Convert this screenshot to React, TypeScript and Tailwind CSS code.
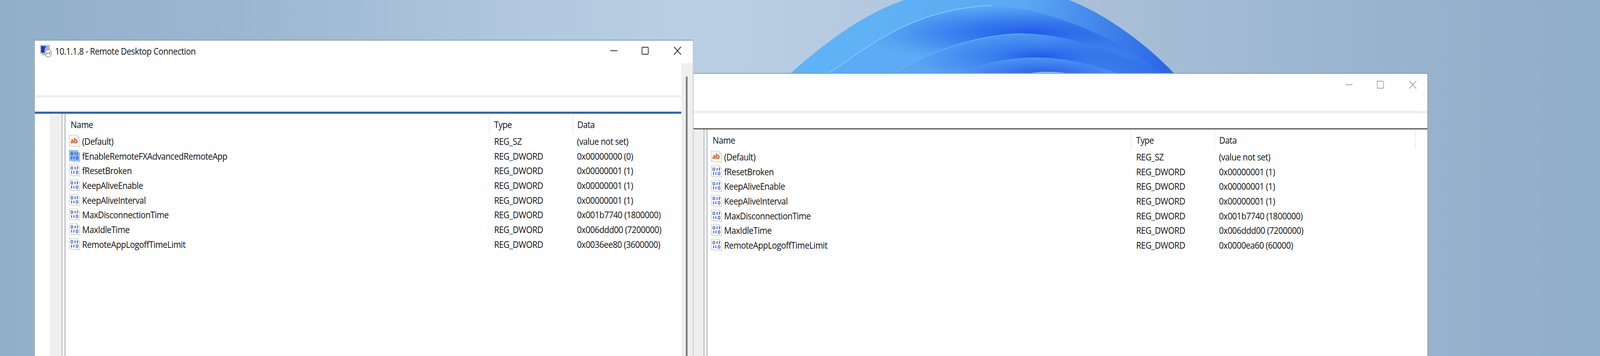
import type { ReactNode } from "react";

const font = "font-['Open_Sans','Noto_Sans',sans-serif]";

const win1Rows = [
  { name: "(Default)", type: "REG_SZ", data: "(value not set)", str: true },
  { name: "fEnableRemoteFXAdvancedRemoteApp", type: "REG_DWORD", data: "0x00000000 (0)", selected: true },
  { name: "fResetBroken", type: "REG_DWORD", data: "0x00000001 (1)" },
  { name: "KeepAliveEnable", type: "REG_DWORD", data: "0x00000001 (1)" },
  { name: "KeepAliveInterval", type: "REG_DWORD", data: "0x00000001 (1)" },
  { name: "MaxDisconnectionTime", type: "REG_DWORD", data: "0x001b7740 (1800000)" },
  { name: "MaxIdleTime", type: "REG_DWORD", data: "0x006ddd00 (7200000)" },
  { name: "RemoteAppLogoffTimeLimit", type: "REG_DWORD", data: "0x0036ee80 (3600000)" },
];

const win2Rows = [
  { name: "(Default)", type: "REG_SZ", data: "(value not set)", str: true },
  { name: "fResetBroken", type: "REG_DWORD", data: "0x00000001 (1)" },
  { name: "KeepAliveEnable", type: "REG_DWORD", data: "0x00000001 (1)" },
  { name: "KeepAliveInterval", type: "REG_DWORD", data: "0x00000001 (1)" },
  { name: "MaxDisconnectionTime", type: "REG_DWORD", data: "0x001b7740 (1800000)" },
  { name: "MaxIdleTime", type: "REG_DWORD", data: "0x006ddd00 (7200000)" },
  { name: "RemoteAppLogoffTimeLimit", type: "REG_DWORD", data: "0x0000ea60 (60000)" },
];

type Row = { name: string; type: string; data: string; str?: boolean; selected?: boolean };

const petal2 = "M2383 190 V187 C2480 130 2620 20 2852 14 C3000 18 3200 90 3345 190 Z";
const petal3 = "M2569 190 V187 C2660 140 2790 88 2943 86 C3080 88 3230 140 3325 187 V190 Z";

function Bloom() {
  return (
    <svg className="absolute left-[2200px] top-0" width="1250" height="200" viewBox="2200 0 1250 200">
      <defs>
        <linearGradient id="p1" x1="2500" y1="0" x2="3350" y2="180" gradientUnits="userSpaceOnUse">
          <stop offset="0" stopColor="#5fb2f5" />
          <stop offset="0.5" stopColor="#5ca8f3" />
          <stop offset="1" stopColor="#2a66e6" />
        </linearGradient>
        <radialGradient id="p2" cx="0" cy="0" r="500" gradientUnits="userSpaceOnUse" gradientTransform="translate(2960 85) scale(1 0.16)">
          <stop offset="0" stopColor="#2459e8" />
          <stop offset="0.35" stopColor="#3478ee" />
          <stop offset="0.85" stopColor="#57a5f3" />
          <stop offset="1" stopColor="#5cabf4" />
        </radialGradient>
        <radialGradient id="p3" cx="0" cy="0" r="380" gradientUnits="userSpaceOnUse" gradientTransform="translate(2990 145) scale(1 0.2)">
          <stop offset="0" stopColor="#2459e8" />
          <stop offset="0.35" stopColor="#3a7eef" />
          <stop offset="1" stopColor="#5aa6f3" />
        </radialGradient>
        <radialGradient id="p4" cx="0" cy="0" r="240" gradientUnits="userSpaceOnUse" gradientTransform="translate(3000 187) scale(1 0.17)">
          <stop offset="0" stopColor="#2a60ea" />
          <stop offset="1" stopColor="#4f97f2" />
        </radialGradient>
        <linearGradient id="shade" x1="3000" y1="0" x2="3330" y2="0" gradientUnits="userSpaceOnUse">
          <stop offset="0" stopColor="#2a66e6" stopOpacity="0" />
          <stop offset="1" stopColor="#2a66e6" stopOpacity="0.9" />
        </linearGradient>
      </defs>
      <path d="M2273 190 V187 C2420 70 2540 10 2640 -10 L3040 -10 C3150 20 3280 100 3373 187 V190 Z" fill="url(#p1)" />
      <path d={petal2} fill="url(#p2)" />
      <path d={petal2} fill="url(#shade)" />
      <path d="M2383 187 C2480 130 2620 20 2852 14" fill="none" stroke="#84ccfa" strokeWidth="2" />
      <path d={petal3} fill="url(#p3)" />
      <path d={petal3} fill="url(#shade)" />
      <path d="M2569 187 C2660 140 2790 88 2943 86" fill="none" stroke="#6fb8f7" strokeWidth="1.5" />
      <path d="M2744 190 V187 C2810 165 2890 148 2976 147 C3060 148 3140 165 3210 187 V190 Z" fill="url(#p4)" />
      <path d="M2947 190 C2975 184 2990 184 3010 184 C3040 184 3060 186 3081 190 Z" fill="#8fbef0" />
    </svg>
  );
}

function RdpIcon() {
  return (
    <svg width="34" height="32" viewBox="0 0 34 32" className="shrink-0">
      <rect x="0.5" y="0.5" width="27" height="22" rx="1" fill="#c9c9c9" stroke="#a8a8a8" />
      <rect x="3" y="3" width="22" height="17" fill="#9db6e6" />
      <path d="M3 3h10v17H3z" fill="#1c37b8" />
      <path d="M13 3h6l-6 9z" fill="#3a5ed0" />
      <rect x="6" y="23" width="10" height="2" fill="#bdbdbd" />
      <rect x="3" y="25" width="16" height="2" fill="#c8c8c8" />
      <circle cx="23.5" cy="21.5" r="9.5" fill="#f3f3f3" stroke="#8a8a8a" strokeWidth="1.6" />
      <path d="M17.5 20l3 2-3 2M29 18.5l-3.5 2.5 3.5 2.5" fill="none" stroke="#2f9a3c" strokeWidth="2" />
    </svg>
  );
}

function PageIcon({ children, selected }: { children: ReactNode; selected?: boolean }) {
  return (
    <svg width="32" height="32" viewBox="0 0 32 32" className="shrink-0">
      <path
        d="M1 1H24L31 8V30C27 31 25 27 21 28C17 29 15 31 12 29C9 27 5 29 1 26Z"
        fill={selected ? "#92bdf0" : "#ffffff"}
        stroke={selected ? "#7da9e2" : "#b4b4b4"}
        strokeWidth="1.2"
      />
      <path d="M24 1V8H31" fill={selected ? "#bcd6f6" : "#f0f0f0"} stroke={selected ? "#7da9e2" : "#b4b4b4"} strokeWidth="1" />
      {children}
    </svg>
  );
}

function StringIcon() {
  return (
    <PageIcon>
      <text x="4" y="21" fontSize="18" fontWeight="700" fill="#cf4a24" fontFamily="'Noto Sans', sans-serif">
        ab
      </text>
    </PageIcon>
  );
}

// binary value icon: two lines of little 0 and 1 marks
function BinaryIcon({ selected }: { selected?: boolean }) {
  const c = selected ? "#1f55c0" : "#2f55d8";
  return (
    <PageIcon selected={selected}>
      <ellipse cx="8.5" cy="9.5" rx="2.8" ry="3.4" fill="none" stroke={c} strokeWidth="2" />
      <rect x="16.5" y="6" width="2.6" height="7" fill={c} />
      <rect x="23" y="6" width="2.6" height="7" fill={c} />
      <rect x="6.5" y="17" width="2.6" height="7" fill={c} />
      <rect x="13" y="17" width="2.6" height="7" fill={c} />
      <ellipse cx="23.5" cy="20.5" rx="2.8" ry="3.4" fill="none" stroke={c} strokeWidth="2" />
    </PageIcon>
  );
}

function RegistryList({ rows }: { rows: Row[] }) {
  return (
    <div className="flex flex-1 min-h-0">
      <div className="w-[43px] shrink-0" />
      <div className="w-[32px] shrink-0 mt-[3px] bg-[#efefef]" />
      <div className="w-[2px] shrink-0" />
      <div className="w-[11px] shrink-0 bg-[#f4f4f4] border-x-2 border-[#9aa1ab]" />
      <div className="w-[2035px] shrink-0 pt-[3px]">
        <div className="flex h-[47px] text-[#111] items-center">
          <div className="w-[1217px] pl-[15px]">Name</div>
          <div className="w-[240px] pl-[13px] border-l-2 border-[#e9e9e9] h-full flex items-center">Type</div>
          <div className="w-[578px] pl-[12px] border-x-2 border-[#e9e9e9] h-full flex items-center">Data</div>
        </div>
        <div className="pt-[1px]">
          {rows.map((row) => (
            <div key={row.name} className="flex h-[37.7px] items-center text-[#111]">
              <div className="w-[1217px] pl-[10px] flex items-center gap-[6px]">
                {row.str ? <StringIcon /> : <BinaryIcon selected={row.selected} />}
                <span>{row.name}</span>
              </div>
              <div className="w-[240px] pl-[15px]">{row.type}</div>
              <div className="pl-[13px]">{row.data}</div>
            </div>
          ))}
        </div>
      </div>
    </div>
  );
}

function Caption({ color }: { color: string }) {
  return (
    <svg width="206" height="24" viewBox="0 0 206 24" fill="none" stroke={color} strokeWidth="2">
      <path d="M2 12H22" />
      <rect x="93" y="3" width="18" height="18" rx="2" />
      <path d="M185 2L205 22M205 2L185 22" />
    </svg>
  );
}

export default function App() {
  return (
    <div className="h-[912px] w-full overflow-hidden">
      <div className={`relative h-[912px] w-[4598px] origin-top-left scale-x-[0.8908] overflow-hidden text-[24px] leading-none tracking-[-0.65px] bg-[linear-gradient(90deg,#92afca_0%,#9bb6d0_15%,#b0c7de_32%,#bacfe3_44%,#b4c9df_55%,#a6bdd6_72%,#9ab4cf_85%,#90adc9_100%)] ${font}`}>
        <Bloom />

        {/* back window */}
        <div className="absolute left-[1943px] top-[187px] bottom-0 w-[2161px] bg-white border-2 border-b-0 border-[#8b9bb0] flex flex-col overflow-hidden">
          <div className="h-[95px] shrink-0 flex justify-end pt-[16px] pr-[31px]">
            <Caption color="#a2a2a2" />
          </div>
          <div className="h-[6px] shrink-0 bg-[#efefef]" />
          <div className="h-[38px] shrink-0" />
          <div className="h-[4px] shrink-0 bg-[#777]" />
          <RegistryList rows={win2Rows} />
        </div>

        {/* remote desktop window */}
        <div className="absolute left-[98px] top-[102px] bottom-0 w-[1895px] bg-white border-2 border-b-0 border-[#8b9bb0] border-r-[#b5bcc6] flex flex-col overflow-hidden">
          <div className="h-[58px] shrink-0 flex pl-[15px] pr-[33px] pt-[11px] justify-between items-start">
            <div className="flex items-center gap-[9px]">
              <RdpIcon />
              <span className="text-[#111]">10.1.1.8 - Remote Desktop Connection</span>
            </div>
            <div className="pt-[3px]">
              <Caption color="#222" />
            </div>
          </div>
          <div className="flex flex-1 min-h-0">
            <div className="flex flex-col w-[1860px] overflow-hidden">
              <div className="h-[82px] shrink-0" />
              <div className="h-[6px] shrink-0 bg-[#efefef]" />
              <div className="h-[36px] shrink-0" />
              <div className="h-[6px] shrink-0 bg-[#2a62b8] border-b-2 border-[#7f8a97]" />
              <RegistryList rows={win1Rows} />
            </div>
            <div className="w-[33px] shrink-0 bg-[#efefef] pl-[13px] pt-[34px]">
              <div className="w-[5px] h-full bg-[#7e7e7e]" />
            </div>
          </div>
        </div>
      </div>
    </div>
  );
}
